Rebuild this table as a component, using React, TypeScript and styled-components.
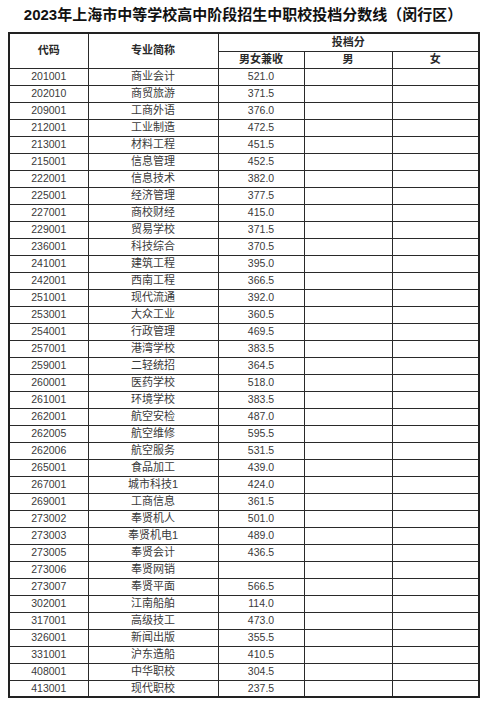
import styled, { createGlobalStyle } from 'styled-components'

const GlobalStyle = createGlobalStyle`
  html, body {
    margin: 0;
    padding: 0;
    background: #ffffff;
  }
  body {
    font-family: 'Liberation Sans', 'Noto Sans CJK SC', sans-serif;
    color: #2b2b2b;
  }
`

const Page = styled.div`
  width: 500px;
  height: 708px;
  box-sizing: border-box;
  padding: 0 22px 0 8px;
  background: #fff;
`

const Title = styled.h1`
  margin: 0;
  height: 32px;
  display: flex;
  align-items: center;
  justify-content: center;
  font-size: 15px;
  font-weight: 700;
  color: #111;
  padding-bottom: 6px;
  box-sizing: border-box;
`

const Table = styled.table`
  width: 470px;
  border-collapse: collapse;
  table-layout: fixed;
  border: 2px solid #222;
`

const Th = styled.th`
  border: 1px solid #2a2a2a;
  padding: 0;
  font-size: 11px;
  font-weight: 700;
  color: #2a2a2a;
  text-align: center;
  line-height: 1;
`

const HeadRow = styled.tr<{ $h: number }>`
  height: ${(p) => p.$h}px;
`

const Row = styled.tr`
  height: 17px;
`

const Td = styled.td<{ $cjk?: boolean }>`
  border: 1px solid #2a2a2a;
  padding: 0;
  font-size: ${(p) => (p.$cjk ? '11px' : '10.5px')};
  color: #3a3a3a;
  text-align: center;
  line-height: 1;
`

const rows: [string, string, string][] = [
  ['201001', '商业会计', '521.0'],
  ['202010', '商贸旅游', '371.5'],
  ['209001', '工商外语', '376.0'],
  ['212001', '工业制造', '472.5'],
  ['213001', '材料工程', '451.5'],
  ['215001', '信息管理', '452.5'],
  ['222001', '信息技术', '382.0'],
  ['225001', '经济管理', '377.5'],
  ['227001', '商校财经', '415.0'],
  ['229001', '贸易学校', '371.5'],
  ['236001', '科技综合', '370.5'],
  ['241001', '建筑工程', '395.0'],
  ['242001', '西南工程', '366.5'],
  ['251001', '现代流通', '392.0'],
  ['253001', '大众工业', '360.5'],
  ['254001', '行政管理', '469.5'],
  ['257001', '港湾学校', '383.5'],
  ['259001', '二轻统招', '364.5'],
  ['260001', '医药学校', '518.0'],
  ['261001', '环境学校', '383.5'],
  ['262001', '航空安检', '487.0'],
  ['262005', '航空维修', '595.5'],
  ['262006', '航空服务', '531.5'],
  ['265001', '食品加工', '439.0'],
  ['267001', '城市科技1', '424.0'],
  ['269001', '工商信息', '361.5'],
  ['273002', '奉贤机人', '501.0'],
  ['273003', '奉贤机电1', '489.0'],
  ['273005', '奉贤会计', '436.5'],
  ['273006', '奉贤网销', ''],
  ['273007', '奉贤平面', '566.5'],
  ['302001', '江南船舶', '114.0'],
  ['317001', '高级技工', '473.0'],
  ['326001', '新闻出版', '355.5'],
  ['331001', '沪东造船', '410.5'],
  ['408001', '中华职校', '304.5'],
  ['413001', '现代职校', '237.5'],
]

export default function App(): JSX.Element {
  return (
    <>
      <GlobalStyle />
      <Page>
        <Title>2023年上海市中等学校高中阶段招生中职校投档分数线（闵行区）</Title>
        <Table>
          <colgroup>
            <col style={{ width: 79 }} />
            <col style={{ width: 130 }} />
            <col style={{ width: 86 }} />
            <col style={{ width: 88 }} />
            <col style={{ width: 87 }} />
          </colgroup>
          <thead>
            <HeadRow $h={18}>
              <Th rowSpan={2}>代码</Th>
              <Th rowSpan={2}>专业简称</Th>
              <Th colSpan={3}>投档分</Th>
            </HeadRow>
            <HeadRow $h={17}>
              <Th>男女兼收</Th>
              <Th>男</Th>
              <Th>女</Th>
            </HeadRow>
          </thead>
          <tbody>
            {rows.map(([code, name, score]) => (
              <Row key={code}>
                <Td>{code}</Td>
                <Td $cjk>{name}</Td>
                <Td>{score}</Td>
                <Td />
                <Td />
              </Row>
            ))}
          </tbody>
        </Table>
      </Page>
    </>
  )
}
